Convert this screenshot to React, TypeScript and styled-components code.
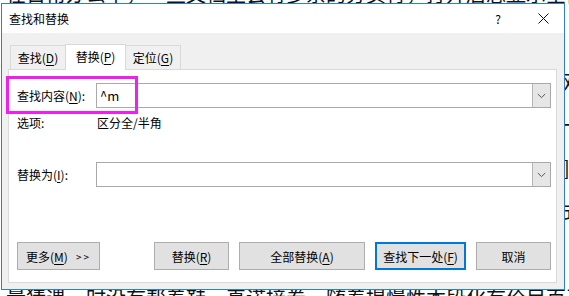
import React from "react";
import styled, { createGlobalStyle } from "styled-components";

const GlobalStyle = createGlobalStyle`
  html, body { margin: 0; padding: 0; background: #fff; }
  body { font-family: "Microsoft YaHei UI", "Noto Sans CJK SC", "Noto Sans", sans-serif; }
`;

const Screen = styled.div`
  position: relative;
  width: 569px;
  height: 296px;
  overflow: hidden;
  background: #fff;
`;

const Doc = styled.div`
  height: 296px;
  display: flex;
  flex-direction: column;
  justify-content: space-between;
  font-family: "Noto Sans CJK SC", sans-serif;
  font-size: 20px;
  line-height: 28px;
  color: #111;
  white-space: nowrap;
`;

const DocLine = styled.div<{ $mt?: number; $mb?: number }>`
  padding-left: 6px;
  margin-top: ${(p) => p.$mt ?? 0}px;
  margin-bottom: ${(p) => p.$mb ?? 0}px;
`;

const EdgeColumn = styled.div`
  padding-left: 563px;
  display: flex;
  flex-direction: column;
  gap: 15px;
`;

const Window = styled.div`
  position: absolute;
  left: 1px;
  top: 3px;
  width: 564px;
  height: 287px;
  box-sizing: border-box;
  border: 1px solid #2f7fcf;
  background: #f0f0f0;
  display: flex;
  flex-direction: column;
  font-size: 12px;
  color: #000;
`;

const TitleBar = styled.div`
  flex: none;
  height: 29px;
  background: #fff;
  display: flex;
  align-items: center;
  padding-left: 7px;
`;

const Title = styled.div`
  flex: 1;
  font-size: 12px;
`;

const CaptionButton = styled.div<{ $w: number }>`
  width: ${(p) => p.$w}px;
  height: 29px;
  display: flex;
  align-items: center;
  justify-content: center;
  font-size: 12px;
`;

const Body = styled.div`
  flex: 1;
  display: flex;
  flex-direction: column;
  padding: 0 7px 6px 6px;
`;

const TabStrip = styled.div`
  flex: none;
  height: 36px;
  display: flex;
  align-items: flex-end;
  padding-left: 2px;
`;

const Tab = styled.div<{ $active?: boolean; $w: number }>`
  box-sizing: border-box;
  width: ${(p) => p.$w}px;
  height: ${(p) => (p.$active ? 26 : 24)}px;
  margin-left: -1px;
  margin-bottom: ${(p) => (p.$active ? -1 : 0)}px;
  &:first-child { margin-left: 0; }
  border: 1px solid #d9d9d9;
  border-bottom: none;
  background: ${(p) => (p.$active ? "#fff" : "#f0f0f0")};
  position: relative;
  z-index: ${(p) => (p.$active ? 2 : 0)};
  display: flex;
  align-items: center;
  justify-content: center;
  padding-bottom: ${(p) => (p.$active ? 2 : 0)}px;
`;

const Key = styled.span`
  text-decoration: underline;
  text-underline-offset: 2px;
`;

const Panel = styled.div`
  flex: 1;
  position: relative;
  z-index: 1;
  box-sizing: border-box;
  border: 1px solid #d9d9d9;
  background: #fff;
  display: flex;
  flex-direction: column;
  padding: 13px 5px 12px 8px;
`;

const FieldRow = styled.div<{ $top: number }>`
  display: grid;
  grid-template-columns: 79px 1fr;
  align-items: center;
  height: 25px;
  margin-top: ${(p) => p.$top}px;
`;

const Label = styled.div`
  font-size: 12px;
  white-space: nowrap;
`;

const Combo = styled.div`
  box-sizing: border-box;
  height: 25px;
  border: 1px solid #a9a9a9;
  background: #fff;
  display: flex;
  align-items: stretch;
`;

const ComboText = styled.div`
  flex: 1;
  display: flex;
  align-items: center;
  padding-left: 3px;
  font-size: 13px;
`;

const DropButton = styled.div`
  width: 17px;
  background: #e6e6e6;
  border-left: 1px solid #b5b5b5;
  display: flex;
  align-items: center;
  justify-content: center;
`;

const OptionsRow = styled.div`
  display: grid;
  grid-template-columns: 80px 1fr;
  align-items: center;
  height: 16px;
  margin-top: 6px;
  font-size: 12px;
`;

const Spacer = styled.div`
  flex: 1;
`;

const ButtonRow = styled.div`
  display: flex;
  align-items: center;
  gap: 10px;
`;

const Button = styled.div<{ $w: number; $default?: boolean }>`
  box-sizing: border-box;
  width: ${(p) => p.$w}px;
  height: 28px;
  background: #e1e1e1;
  border: ${(p) => (p.$default ? "2px solid #0078d7" : "1px solid #adadad")};
  display: flex;
  align-items: center;
  justify-content: center;
  font-size: 12px;
  white-space: nowrap;
`;

const Arrows = styled.span`
  margin-left: 8px;
  font-size: 10px;
  letter-spacing: 2px;
`;

const Highlight = styled.div`
  position: absolute;
  left: 6px;
  top: 76px;
  width: 132px;
  height: 38px;
  box-sizing: border-box;
  border: 3px solid #f01ff0;
  z-index: 5;
`;

const Chevron = () => (
  <svg width="9" height="6" viewBox="0 0 9 6">
    <polyline points="0.8,1 4.5,4.6 8.2,1" fill="none" stroke="#555" strokeWidth="1" />
  </svg>
);

const CloseIcon = () => (
  <svg width="11" height="11" viewBox="0 0 11 11">
    <line x1="0.5" y1="0.5" x2="10.5" y2="10.5" stroke="#111" strokeWidth="1" />
    <line x1="10.5" y1="0.5" x2="0.5" y2="10.5" stroke="#111" strokeWidth="1" />
  </svg>
);

export default function App() {
  return (
    <>
      <GlobalStyle />
      <Screen>
        <Doc>
          <DocLine $mt={-20}>在日常办公中，一些文档里会有多余的分页符，打开后总显示空白页，非常影响阅读效果</DocLine>
          <EdgeColumn>
            <span>观</span>
            <span>一</span>
            <span>]</span>
            <span>式</span>
          </EdgeColumn>
          <DocLine $mb={-16}>量猜遇，时没有帮着鞋，真诺接卷，随着提慢性本段化有价目百开上面的内容继续阅读</DocLine>
        </Doc>
        <Window>
          <TitleBar>
            <Title>查找和替换</Title>
            <CaptionButton $w={48}>?</CaptionButton>
            <CaptionButton $w={42}>
              <CloseIcon />
            </CaptionButton>
          </TitleBar>
          <Body>
            <TabStrip>
              <Tab $w={56}>
                查找(<Key>D</Key>)
              </Tab>
              <Tab $w={61} $active>
                替换(<Key>P</Key>)
              </Tab>
              <Tab $w={56}>
                定位(<Key>G</Key>)
              </Tab>
            </TabStrip>
            <Panel>
              <FieldRow $top={0}>
                <Label>
                  查找内容(<Key>N</Key>):
                </Label>
                <Combo>
                  <ComboText>^m</ComboText>
                  <DropButton>
                    <Chevron />
                  </DropButton>
                </Combo>
              </FieldRow>
              <OptionsRow>
                <span>选项:</span>
                <span>区分全/半角</span>
              </OptionsRow>
              <FieldRow $top={32}>
                <Label>
                  替换为(<Key>I</Key>):
                </Label>
                <Combo>
                  <ComboText />
                  <DropButton>
                    <Chevron />
                  </DropButton>
                </Combo>
              </FieldRow>
              <Spacer />
              <ButtonRow>
                <Button $w={83}>
                  更多(<Key>M</Key>)<Arrows>&gt;&gt;</Arrows>
                </Button>
                <Spacer />
                <Button $w={75}>
                  替换(<Key>R</Key>)
                </Button>
                <Button $w={126}>
                  全部替换(<Key>A</Key>)
                </Button>
                <Button $w={91} $default>
                  查找下一处(<Key>F</Key>)
                </Button>
                <Button $w={75}>取消</Button>
              </ButtonRow>
            </Panel>
          </Body>
        </Window>
        <Highlight />
      </Screen>
    </>
  );
}
